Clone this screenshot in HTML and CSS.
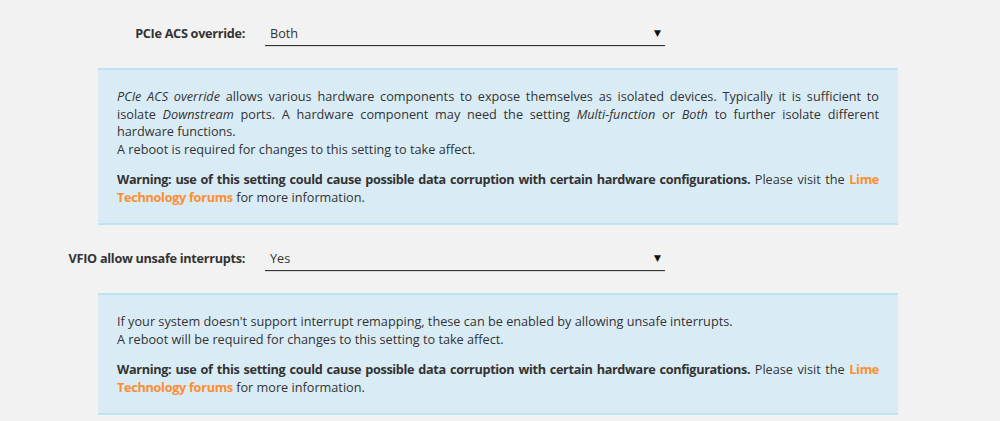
FILE: index.html
```html
<!DOCTYPE html>
<html lang="en">
<head>
    <meta charset="UTF-8">
    <meta name="viewport" content="width=device-width, initial-scale=1.0">
    <title>VM Manager</title>
    <link rel="stylesheet" href="styles.css">
</head>
<body>
    <div id="settings">
        <div class="setting-row">
            <label class="setting-label">PCIe ACS override:</label>
            <div class="select-box">
                <span>Both</span>
                <span class="arrow">&#9660;</span>
            </div>
        </div>
        <div class="help-box">
            <p><em>PCIe ACS override</em> allows various hardware components to expose themselves as isolated devices. Typically it is sufficient to isolate <em>Downstream</em> ports. A hardware component may need the setting <em>Multi-function</em> or <em>Both</em> to further isolate different hardware functions.<br>A reboot is required for changes to this setting to take affect.</p>
            <p><b>Warning: use of this setting could cause possible data corruption with certain hardware configurations.</b> Please visit the <a href="#">Lime Technology forums</a> for more information.</p>
        </div>

        <div class="setting-row">
            <label class="setting-label">VFIO allow unsafe interrupts:</label>
            <div class="select-box">
                <span>Yes</span>
                <span class="arrow">&#9660;</span>
            </div>
        </div>
        <div class="help-box">
            <p>If your system doesn't support interrupt remapping, these can be enabled by allowing unsafe interrupts.<br>A reboot will be required for changes to this setting to take affect.</p>
            <p><b>Warning: use of this setting could cause possible data corruption with certain hardware configurations.</b> Please visit the <a href="#">Lime Technology forums</a> for more information.</p>
        </div>
    </div>
</body>
</html>
```

FILE: styles.css
```css
body {
    margin: 0;
    background: #f2f2f2;
    font-family: "Open Sans", "DejaVu Sans", sans-serif;
    font-size: 12.7px;
    color: #333;
}

#settings {
    padding-top: 16px;
}

.setting-row {
    display: flex;
    align-items: center;
    height: 34px;
    margin-top: 16px;
}

.setting-row:first-child {
    margin-top: 0;
}

.setting-label {
    width: 245px;
    text-align: right;
    font-weight: bold;
    letter-spacing: -0.3px;
}

.select-box {
    display: flex;
    justify-content: space-between;
    align-items: center;
    box-sizing: border-box;
    width: 400px;
    height: 26px;
    margin-left: 20px;
    padding: 0 4px 0 5px;
    border-bottom: 1px solid #333;
    box-shadow: 0 1px 0 #d8d8d8;
}

.arrow {
    font-size: 9px;
    color: #111;
}

.help-box {
    width: 800px;
    box-sizing: border-box;
    margin: 18px 0 0 98px;
    padding: 18px 19px 17px 19px;
    background: #d9ecf6;
    border-top: 2px solid #bde4f2;
    border-bottom: 2px solid #bde4f2;
    line-height: 17.5px;
    text-align: justify;
}

.help-box p {
    margin: 0 0 13px 0;
}

.help-box p:last-child {
    margin-bottom: 0;
}

.help-box b {
    letter-spacing: -0.35px;
}

.help-box a {
    color: #ff8c2f;
    font-weight: bold;
    letter-spacing: -0.3px;
    text-decoration: none;
}
```
